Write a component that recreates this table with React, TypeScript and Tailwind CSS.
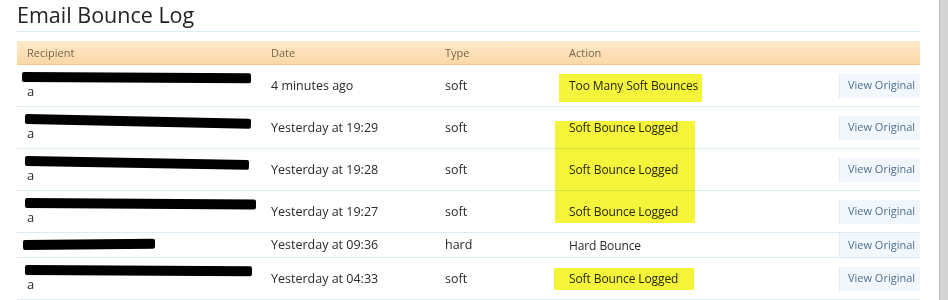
import React from "react";

type Row = {
  bar: { w: number; rot: number; ml: number };
  a: boolean;
  date: string;
  type: string;
  action: string;
  tall: boolean;
};

const rows: Row[] = [
  { bar: { w: 229, rot: 0.3, ml: -3 }, a: true, date: "4 minutes ago", type: "soft", action: "Too Many Soft Bounces", tall: true },
  { bar: { w: 226, rot: 1.2, ml: 0 }, a: true, date: "Yesterday at 19:29", type: "soft", action: "Soft Bounce Logged", tall: true },
  { bar: { w: 224, rot: 1.0, ml: 0 }, a: true, date: "Yesterday at 19:28", type: "soft", action: "Soft Bounce Logged", tall: true },
  { bar: { w: 231, rot: 0.4, ml: 0 }, a: true, date: "Yesterday at 19:27", type: "soft", action: "Soft Bounce Logged", tall: true },
  { bar: { w: 132, rot: -0.6, ml: -2 }, a: false, date: "Yesterday at 09:36", type: "hard", action: "Hard Bounce", tall: false },
  { bar: { w: 227, rot: 0.3, ml: 0 }, a: true, date: "Yesterday at 04:33", type: "soft", action: "Soft Bounce Logged", tall: true },
];

const cols = "grid grid-cols-[244px_174px_124px_280px_81px]";

export default function App() {
  return (
    <div
      className="relative flex w-[948px] h-[300px] overflow-hidden bg-white"
      style={{ fontFamily: '"Open Sans", "DejaVu Sans", sans-serif' }}
    >
      <div className="flex-1 pl-[17px] pr-[19px]">
        <h1 className="text-[21.5px] leading-[29px] text-[#222] pb-[2px]">
          Email Bounce Log
        </h1>
        <div className="h-px bg-[#dcecf5] mb-[9px]" />
        <div className={`${cols} h-[24px] items-center text-[11px] text-[#7d6448] bg-gradient-to-b from-[#fee9cc] to-[#fcd8a6] border-b border-[#f4c98e]`}>
          <div className="pl-[10px] pt-[1px]">Recipient</div>
          <div className="pl-[10px] pt-[1px]">Date</div>
          <div className="pl-[10px] pt-[1px]">Type</div>
          <div className="pl-[10px] pt-[1px]">Action</div>
          <div />
        </div>
        {rows.map((r, i) => (
          <div
            key={i}
            className={`${cols} ${r.tall ? "h-[42px]" : "h-[25px]"} items-center text-[12.5px] text-[#2a2a2a] border-b border-[#dcebf4]`}
          >
            <div className="pl-[8px] flex flex-col justify-center">
              <div
                className="h-[10px] bg-black rounded-[2px]"
                style={{ width: r.bar.w, marginLeft: r.bar.ml, transform: `rotate(${r.bar.rot}deg)`, transformOrigin: "left center" }}
              />
              {r.a && <div className="pl-[2px] leading-[15px] mt-[2px] text-[13px]">a</div>}
            </div>
            <div className="pl-[10px] pt-[1px]">{r.date}</div>
            <div className="pl-[10px] pt-[1px]">{r.type}</div>
            <div className="pl-[10px] pt-[1px] text-[12px] tracking-[-0.1px]">{r.action}</div>
            <div className="flex justify-end">
              <div className="w-[81px] h-[24px] flex items-center justify-center pl-[3px] bg-[#f1f7fc] border-l border-[#e2edf5] text-[11px] text-[#4f6f8f]">
                View Original
              </div>
            </div>
          </div>
        ))}
      </div>
      <div className="w-[9px] h-full bg-[#d3d3d3] border-l border-[#bdbdbd]" />

      <div className="absolute left-[559px] top-[74px] w-[143px] h-[28px] bg-[#f4f43a] mix-blend-multiply" />
      <div className="absolute left-[555px] top-[121px] w-[140px] h-[102px] bg-[#f4f43a] mix-blend-multiply" />
      <div className="absolute left-[554px] top-[268px] w-[140px] h-[22px] bg-[#f4f43a] mix-blend-multiply" />
    </div>
  );
}
